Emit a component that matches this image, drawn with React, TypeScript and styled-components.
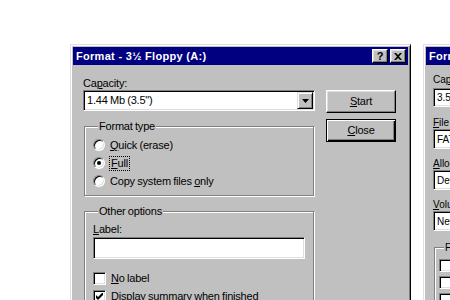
import React from "react";
import styled, { createGlobalStyle } from "styled-components";

const Global = createGlobalStyle`
  html, body { margin: 0; padding: 0; background: #fff; overflow: hidden; }
  body { font-family: "Liberation Sans", Arial, sans-serif; font-size: 11px; color: #000; }
`;

const Desktop = styled.div`
  width: 450px;
  height: 300px;
  overflow: hidden;
  box-sizing: border-box;
  display: flex;
  align-items: flex-start;
  gap: 12px;
  padding: 44px 0 0 70px;
  background: #fff;
`;

const Window = styled.div<{ $w: number }>`
  flex: none;
  width: ${(p) => p.$w}px;
  height: 280px;
  box-sizing: border-box;
  background: #c0c0c0;
  border: 1px solid;
  border-color: #dfdfdf #000 #000 #dfdfdf;
  box-shadow: inset 1px 1px 0 #fff, inset -1px -1px 0 #808080;
  padding: 2px;
`;

const TitleBar = styled.div`
  height: 18px;
  display: flex;
  align-items: center;
  background: #000080;
  color: #fff;
  font-weight: bold;
  font-size: 11px;
  letter-spacing: 0.3px;
  padding: 0 2px 0 3px;
  white-space: nowrap;
  overflow: hidden;
`;

const TitleText = styled.div`
  flex: 1;
  line-height: 18px;
`;

const TitleButton = styled.div`
  flex: none;
  width: 16px;
  height: 14px;
  box-sizing: border-box;
  margin-left: 2px;
  background: #c0c0c0;
  border: 1px solid;
  border-color: #fff #000 #000 #fff;
  box-shadow: inset -1px -1px 0 #808080, inset 1px 1px 0 #dfdfdf;
  display: flex;
  align-items: center;
  justify-content: center;
  color: #000;
  font-size: 11px;
  font-weight: bold;
  letter-spacing: 0;
  line-height: 1;
`;

const Body = styled.div`
  display: flex;
  gap: 11px;
  padding: 12px 12px 0 10px;
  letter-spacing: -0.2px;
  word-spacing: -0.5px;
`;

const LeftCol = styled.div`
  width: 232px;
  flex: none;
  display: flex;
  flex-direction: column;
`;

const RightCol = styled.div`
  width: 70px;
  flex: none;
  display: flex;
  flex-direction: column;
  gap: 6px;
  padding-top: 13px;
`;

const Caption = styled.div<{ $mb?: number }>`
  line-height: 13px;
  height: 13px;
  margin-bottom: ${(p) => p.$mb ?? 0}px;
  white-space: nowrap;
`;

const Key = styled.span`
  text-decoration: underline;
  text-underline-offset: 1px;
`;

const Sunken = styled.div<{ $h: number; $w?: number }>`
  box-sizing: border-box;
  height: ${(p) => p.$h}px;
  width: ${(p) => (p.$w ? `${p.$w}px` : "auto")};
  background: #fff;
  border: 1px solid;
  border-color: #808080 #fff #fff #808080;
  box-shadow: inset 1px 1px 0 #000, inset -1px -1px 0 #dfdfdf;
  padding: 2px 2px 2px 3px;
  display: flex;
  align-items: center;
  white-space: nowrap;
  overflow: hidden;
`;

const ComboText = styled.div`
  flex: 1;
  line-height: 13px;
`;

const ArrowButton = styled.div`
  flex: none;
  width: 16px;
  height: 17px;
  margin-right: -1px;
  box-sizing: border-box;
  background: #c0c0c0;
  border: 1px solid;
  border-color: #dfdfdf #000 #000 #dfdfdf;
  box-shadow: inset 1px 1px 0 #fff, inset -1px -1px 0 #808080;
  display: flex;
  align-items: center;
  justify-content: center;
`;

const Button = styled.div<{ $default?: boolean }>`
  box-sizing: border-box;
  width: 70px;
  height: 23px;
  background: #c0c0c0;
  border: 1px solid;
  border-color: ${(p) => (p.$default ? "#000" : "#fff #000 #000 #fff")};
  box-shadow: ${(p) =>
    p.$default
      ? "inset 1px 1px 0 #fff, inset -1px -1px 0 #000, inset -2px -2px 0 #808080"
      : "inset -1px -1px 0 #808080, inset 1px 1px 0 #dfdfdf"};
  display: flex;
  align-items: center;
  justify-content: center;
  line-height: 13px;
`;

const Group = styled.fieldset<{ $mt: number; $pb: number; $pl: number }>`
  margin: ${(p) => p.$mt}px 1px 0 1px;
  padding: 3px 8px ${(p) => p.$pb}px ${(p) => p.$pl}px;
  border: 1px solid #808080;
  box-shadow: inset 1px 1px 0 #fff, 1px 1px 0 #fff;
  min-width: 0;
`;

const Legend = styled.legend`
  padding: 0 1px;
  margin-left: 5px;
  line-height: 13px;
  background: #c0c0c0;
`;

const OptionRow = styled.div<{ $h?: number }>`
  display: flex;
  align-items: center;
  gap: 5px;
  height: ${(p) => p.$h ?? 18}px;
  white-space: nowrap;
`;

const Radio = styled.span<{ $checked?: boolean }>`
  flex: none;
  width: 12px;
  height: 12px;
  box-sizing: border-box;
  border-radius: 50%;
  background: #fff;
  border: 1px solid;
  border-color: #808080 #fff #fff #808080;
  box-shadow: inset 1px 1px 0 #000, inset -1px -1px 0 #dfdfdf;
  display: flex;
  align-items: center;
  justify-content: center;
  &::after {
    content: "";
    display: ${(p) => (p.$checked ? "block" : "none")};
    width: 4px;
    height: 4px;
    border-radius: 50%;
    background: #000;
  }
`;

const Check = styled.span`
  flex: none;
  width: 13px;
  height: 13px;
  box-sizing: border-box;
  background: #fff;
  border: 1px solid;
  border-color: #808080 #fff #fff #808080;
  box-shadow: inset 1px 1px 0 #000, inset -1px -1px 0 #dfdfdf;
  display: flex;
  align-items: center;
  justify-content: center;
`;

const Focus = styled.span`
  outline: 1px dotted #000;
  outline-offset: 0;
  padding: 0 1px;
  line-height: 13px;
`;

const Spacer = styled.div<{ $h: number }>`
  height: ${(p) => p.$h}px;
`;

const SideBody = styled.div`
  display: flex;
  flex-direction: column;
  padding: 8px 0 0 7px;
  width: 230px;
  font-size: 10px;
`;

const CheckMark = () => (
  <svg width="7" height="7" viewBox="0 0 7 7">
    <path d="M0 2 L2 4 L6 0 L7 0 L7 2 L2 7 L0 5 Z" fill="#000" />
  </svg>
);

const DownArrow = () => (
  <svg width="7" height="4" viewBox="0 0 7 4">
    <path d="M0 0 H7 L3.5 4 Z" fill="#000" />
  </svg>
);

const CloseGlyph = () => (
  <svg width="8" height="7" viewBox="0 0 8 7">
    <path d="M0 0 H2 L4 2 L6 0 H8 L5 3.5 L8 7 H6 L4 5 L2 7 H0 L3 3.5 Z" fill="#000" />
  </svg>
);

const Title = () => (
  <TitleBar>
    <TitleText>Format - 3½ Floppy (A:)</TitleText>
    <TitleButton>?</TitleButton>
    <TitleButton>
      <CloseGlyph />
    </TitleButton>
  </TitleBar>
);

export default function App() {
  return (
    <>
      <Global />
      <Desktop>
        <Window $w={341}>
          <Title />
          <Body>
            <LeftCol>
              <Caption>
                Ca<Key>p</Key>acity:
              </Caption>
              <Sunken $h={21}>
                <ComboText>1.44 Mb (3.5")</ComboText>
                <ArrowButton>
                  <DownArrow />
                </ArrowButton>
              </Sunken>
              <Group $mt={9} $pb={5} $pl={8}>
                <Legend>Format type</Legend>
                <OptionRow>
                  <Radio />
                  <span>
                    <Key>Q</Key>uick (erase)
                  </span>
                </OptionRow>
                <OptionRow>
                  <Radio $checked />
                  <Focus>
                    <Key>F</Key>ull
                  </Focus>
                </OptionRow>
                <OptionRow>
                  <Radio />
                  <span>
                    Copy system files <Key>o</Key>nly
                  </span>
                </OptionRow>
              </Group>
              <Group $mt={9} $pb={10} $pl={8}>
                <Legend>Other options</Legend>
                <Spacer $h={2} />
                <Caption $mb={1}>
                  <Key>L</Key>abel:
                </Caption>
                <Sunken $h={22} $w={212} />
                <Spacer $h={10} />
                <OptionRow>
                  <Check />
                  <span>
                    <Key>N</Key>o label
                  </span>
                </OptionRow>
                <OptionRow>
                  <Check>
                    <CheckMark />
                  </Check>
                  <span>
                    <Key>D</Key>isplay summary when finished
                  </span>
                </OptionRow>
              </Group>
            </LeftCol>
            <RightCol>
              <Button>
                <span>
                  <Key>S</Key>tart
                </span>
              </Button>
              <Button $default>
                <span>
                  <Key>C</Key>lose
                </span>
              </Button>
            </RightCol>
          </Body>
        </Window>
        <Window $w={300}>
          <Title />
          <SideBody>
            <Caption $mb={2}>
              Ca<Key>p</Key>acity:
            </Caption>
            <Sunken $h={19}>
              <ComboText>3.5", 1.44MB, 512 bytes/sector</ComboText>
            </Sunken>
            <Spacer $h={9} />
            <Caption>
              <Key>F</Key>ile system
            </Caption>
            <Sunken $h={20}>
              <ComboText>FAT</ComboText>
            </Sunken>
            <Spacer $h={8} />
            <Caption>
              <Key>A</Key>llocation unit size
            </Caption>
            <Sunken $h={20}>
              <ComboText>Default allocation size</ComboText>
            </Sunken>
            <Spacer $h={8} />
            <Caption>
              <Key>V</Key>olume label
            </Caption>
            <Sunken $h={20}>
              <ComboText>New Volume</ComboText>
            </Sunken>
            <Group $mt={10} $pb={6} $pl={4}>
              <Legend>Format options</Legend>
              <OptionRow $h={17}>
                <Check />
                <span>Quick Format</span>
              </OptionRow>
              <OptionRow $h={17}>
                <Check />
                <span>Enable Compression</span>
              </OptionRow>
              <OptionRow $h={17}>
                <Check />
                <span>Create an MS-DOS startup disk</span>
              </OptionRow>
            </Group>
          </SideBody>
        </Window>
      </Desktop>
    </>
  );
}
